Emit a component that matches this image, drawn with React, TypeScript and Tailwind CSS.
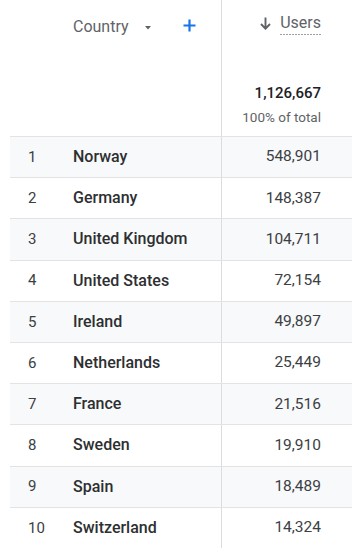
import React from "react";

const rows: [number, string, string][] = [
  [1, "Norway", "548,901"],
  [2, "Germany", "148,387"],
  [3, "United Kingdom", "104,711"],
  [4, "United States", "72,154"],
  [5, "Ireland", "49,897"],
  [6, "Netherlands", "25,449"],
  [7, "France", "21,516"],
  [8, "Sweden", "19,910"],
  [9, "Spain", "18,489"],
  [10, "Switzerland", "14,324"],
];

export default function App() {
  return (
    <div
      className="w-[352px] h-[558px] bg-white overflow-hidden text-[#202124]"
      style={{ fontFamily: "Roboto, 'Noto Sans', sans-serif" }}
    >
      {/* Header */}
      <div className="flex h-[136px]">
        <div className="w-[222px] border-r border-[#dadce0] flex items-start pt-[17px] pl-[73px]">
          <div className="flex items-center h-[20px]">
            <span className="text-[16px] leading-[20px] text-[#5f6368]">Country</span>
            <svg className="ml-[16px] mt-[1px]" width="6" height="4" viewBox="0 0 6 4">
              <polygon points="0,0 6,0 3,3.5" fill="#5f6368" />
            </svg>
            <svg className="ml-[32px] -mt-[3px]" width="13" height="13" viewBox="0 0 13 13">
              <path d="M6.5 0.5v12M0.5 6.5h12" stroke="#1a73e8" strokeWidth="2.2" />
            </svg>
          </div>
        </div>
        <div className="flex-1 flex flex-col items-end pr-[31px] pt-[13px]">
          <div className="flex items-start">
            <svg className="mt-[4px] mr-[9px]" width="11" height="13" viewBox="0 0 11 13">
              <path d="M5.5 0.5v11M1 7l4.5 4.7L10 7" stroke="#5f6368" strokeWidth="1.9" fill="none" />
            </svg>
            <div className="flex flex-col">
              <span className="text-[16px] leading-[20px] text-[#5f6368]">Users</span>
              <div className="h-px mt-[1px] bg-[repeating-linear-gradient(to_right,#9aa0a6_0_2px,transparent_2px_3px)]" />
            </div>
          </div>
          <div className="mt-[48px] text-[15px] leading-[20px] font-medium text-[#202124]">
            1,126,667
          </div>
          <div className="mt-[5px] text-[13.5px] leading-[18px] text-[#5f6368]">100% of total</div>
        </div>
      </div>

      {/* Rows */}
      {rows.map(([n, name, val]) => (
        <div
          key={n}
          className={`ml-[10px] flex h-[41.2px] border-t border-[#e3e3e3] ${
            n % 2 === 1 ? "bg-[#f8f9fa]" : "bg-white"
          }`}
        >
          <div className="w-[212px] border-r border-[#dadce0] flex items-center">
            <span className="w-[63px] pl-[18px] text-[15px] text-[#3c4043]">{n}</span>
            <span className="text-[16px] font-medium text-[#2d2f31]">{name}</span>
          </div>
          <div className="flex-1 flex items-center justify-end pr-[31px] text-[15.5px] text-[#3c4043]">
            {val}
          </div>
        </div>
      ))}
    </div>
  );
}
